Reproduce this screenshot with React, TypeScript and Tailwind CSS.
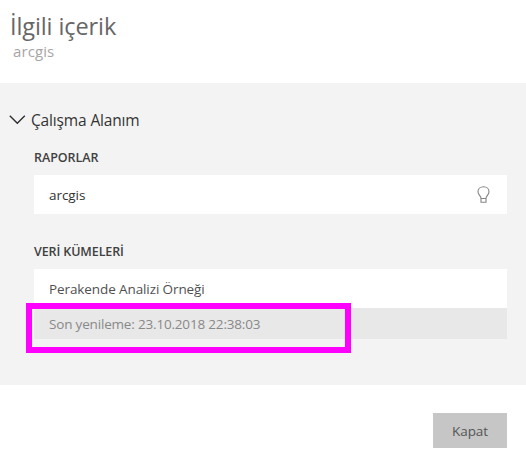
function ChevronDown() {
  return (
    <svg className="h-[10px] w-[17px] shrink-0" viewBox="0 0 17 10" fill="none" stroke="#2b2b2b" strokeWidth="1.3">
      <path d="M0.8 0.8 8.3 8.3 15.8 0.8" />
    </svg>
  );
}

function Bulb() {
  return (
    <svg className="h-[17px] w-[13px]" viewBox="0 0 13 17" fill="none" stroke="#858585" strokeWidth="1.1">
      <path d="M4 12.5C4 9.8 1 8.8 1 5.7C1 2.7 3.4 .7 6.5 .7S12 2.7 12 5.7C12 8.8 9 9.8 9 12.5M4 12.5H9V16.2H4Z" />
    </svg>
  );
}

export default function App() {
  return (
    <div className="flex h-[460px] w-[526px] flex-col overflow-hidden bg-white font-['Open_Sans','Noto_Sans',sans-serif] whitespace-nowrap">
      <header className="h-[83px] shrink-0 pt-[10px]">
        <h1 className="pl-[10px] text-[23.5px] leading-8 tracking-[-0.1px] text-[#666666]">İlgili içerik</h1>
        <p className="-mt-px pl-[13px] text-[15px] leading-5 tracking-[0.1px] text-[#a6a6a6]">arcgis</p>
      </header>

      <main className="h-[302px] shrink-0 bg-[#f3f3f3] pt-[27px] pr-[19px] pl-[34px]">
        <div className="-ml-[25px] flex h-5 items-center gap-[5px]">
          <ChevronDown />
          <h2 className="text-[15.5px] leading-5 tracking-[-0.15px] text-[#333333]">Çalışma Alanım</h2>
        </div>

        <h3 className="mt-5 text-[12.5px] leading-4 font-semibold tracking-[-0.05px] text-[#404040]">RAPORLAR</h3>
        <div className="mt-[9px] flex h-[39px] items-center justify-between bg-white pr-[17px] pl-[15px]">
          <span className="pt-[2px] text-[13.5px] tracking-[-0.05px] text-[#333333]">arcgis</span>
          <Bulb />
        </div>

        <h3 className="mt-[30px] text-[12.5px] leading-4 font-semibold tracking-[-0.1px] text-[#404040]">VERİ KÜMELERİ</h3>
        <div className="mt-[9px] flex h-[39px] items-center bg-white pl-[15px]">
          <span className="pt-[2px] text-[13.5px] tracking-[-0.1px] text-[#505050]">Perakende Analizi Örneği</span>
        </div>
        <div className="relative flex h-[31px] items-center bg-[#e8e8e8] pl-[15px]">
          <span className="pt-[2px] text-[13.5px] tracking-[-0.18px] text-[#888888]">Son yenileme: 23.10.2018 22:38:03</span>
          <div className="absolute -top-[5px] -left-[8px] h-[50px] w-[325px] border-[6px] border-[#ff00ff]" />
        </div>
      </main>

      <footer className="flex justify-end pt-7 pr-[19px]">
        <button className="h-[35px] w-[74px] bg-[#c6c6c6] pt-px text-[13.5px] tracking-[-0.1px] text-[#555555]">Kapat</button>
      </footer>
    </div>
  );
}
